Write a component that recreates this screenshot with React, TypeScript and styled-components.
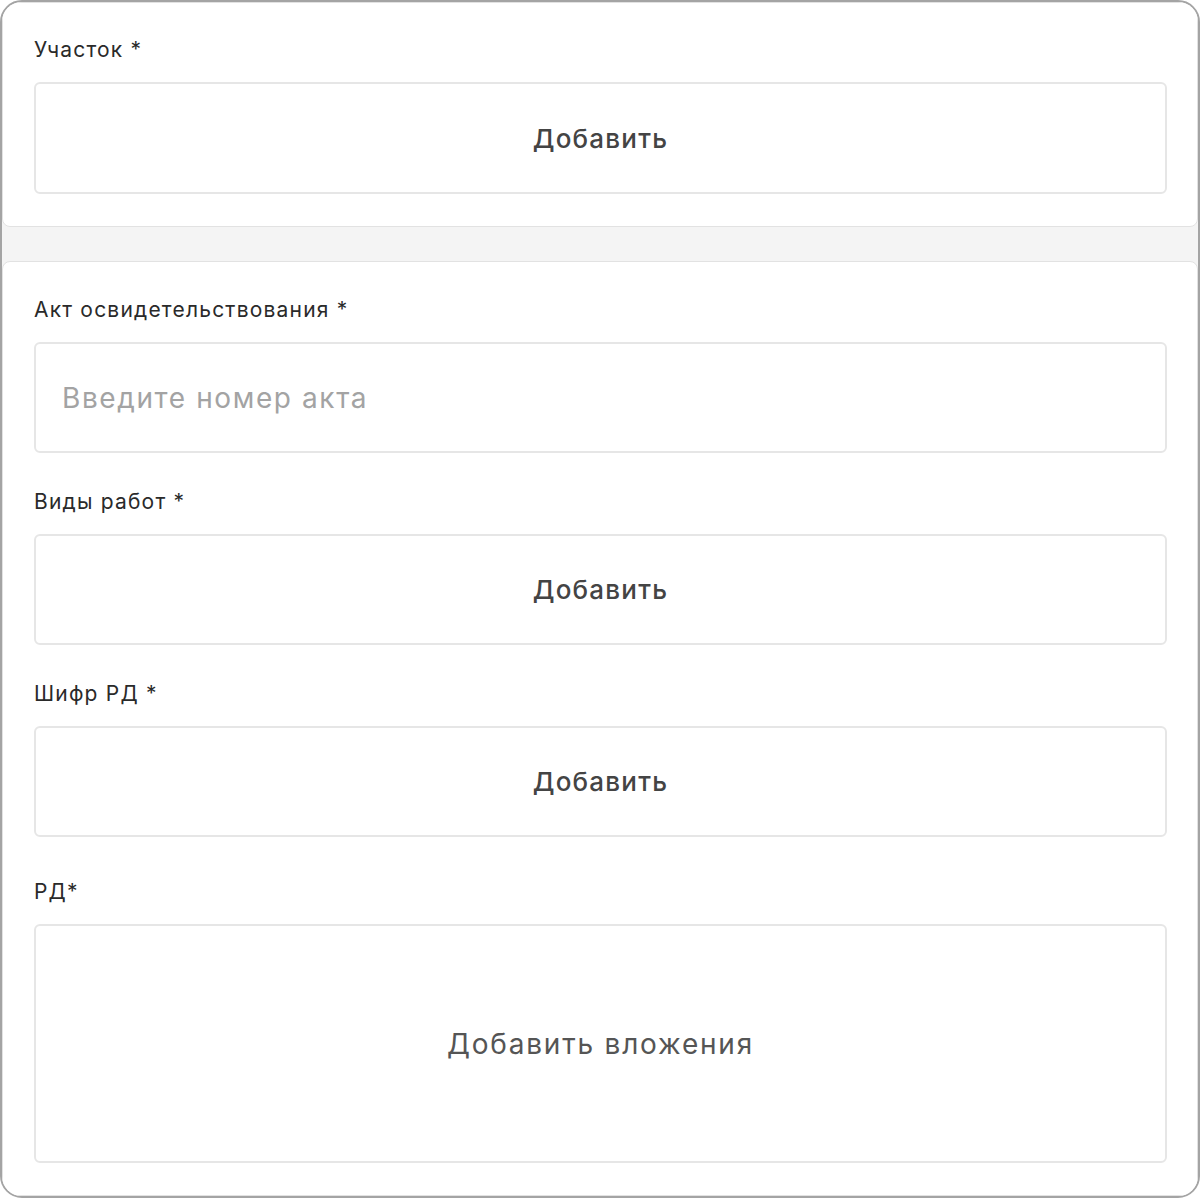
import styled, { createGlobalStyle } from 'styled-components';

const GlobalStyle = createGlobalStyle`
  html, body {
    margin: 0;
    padding: 0;
    background: #ffffff;
  }
  * {
    box-sizing: border-box;
  }
`;

const Frame = styled.div`
  width: 1200px;
  height: 1198px;
  display: flex;
  flex-direction: column;
  gap: 34px;
  border: 2px solid #a4a4a4;
  border-radius: 22px;
  overflow: hidden;
  background: #f4f4f4;
  font-family: Inter, 'Noto Sans', sans-serif;
`;

const Card = styled.section<{ $grow?: boolean; $top: number }>`
  display: flex;
  flex-direction: column;
  flex: ${(p) => (p.$grow ? 1 : 'none')};
  padding: ${(p) => p.$top}px 30px 32px 31px;
  background: #ffffff;
  border: 1px solid #e2e2e2;
  border-radius: 8px;
`;

const Field = styled.div<{ $space?: number }>`
  display: flex;
  flex-direction: column;
  flex-shrink: 0;
  margin-top: ${(p) => p.$space ?? 0}px;
`;

const Label = styled.label`
  display: block;
  height: 20px;
  margin-bottom: 22px;
  font-size: 21px;
  line-height: 20px;
  letter-spacing: 1.2px;
  color: #2a2a2a;
  white-space: nowrap;
`;

const AddButton = styled.button<{ $h: number; $big?: boolean }>`
  display: flex;
  align-items: center;
  justify-content: center;
  width: 100%;
  height: ${(p) => p.$h}px;
  padding: 0;
  border: 2px solid #e6e6e6;
  border-radius: 6px;
  background: #ffffff;
  font-family: inherit;
  font-size: ${(p) => (p.$big ? '28px' : '26px')};
  font-weight: ${(p) => (p.$big ? 400 : 500)};
  letter-spacing: ${(p) => (p.$big ? '1.8px' : '1.2px')};
  color: ${(p) => (p.$big ? '#555555' : '#444444')};
  cursor: pointer;
`;

const Input = styled.input`
  width: 100%;
  height: 111px;
  padding: 0 26px;
  border: 2px solid #e6e6e6;
  border-radius: 6px;
  background: #ffffff;
  font-family: inherit;
  font-size: 28px;
  letter-spacing: 1.6px;
  color: #2a2a2a;
  outline: none;
  &::placeholder {
    color: #a3a3a3;
  }
`;

const App = () => {
  return (
    <>
      <GlobalStyle />
      <Frame>
        <Card $top={37}>
          <Field>
            <Label>Участок *</Label>
            <AddButton $h={112}>Добавить</AddButton>
          </Field>
        </Card>
        <Card $grow $top={38}>
          <Field>
            <Label>Акт освидетельствования *</Label>
            <Input placeholder="Введите номер акта" />
          </Field>
          <Field $space={39}>
            <Label>Виды работ *</Label>
            <AddButton $h={111}>Добавить</AddButton>
          </Field>
          <Field $space={39}>
            <Label>Шифр РД *</Label>
            <AddButton $h={111}>Добавить</AddButton>
          </Field>
          <Field $space={45}>
            <Label>РД*</Label>
            <AddButton $h={239} $big>
              Добавить вложения
            </AddButton>
          </Field>
        </Card>
      </Frame>
    </>
  );
};

export default App;
